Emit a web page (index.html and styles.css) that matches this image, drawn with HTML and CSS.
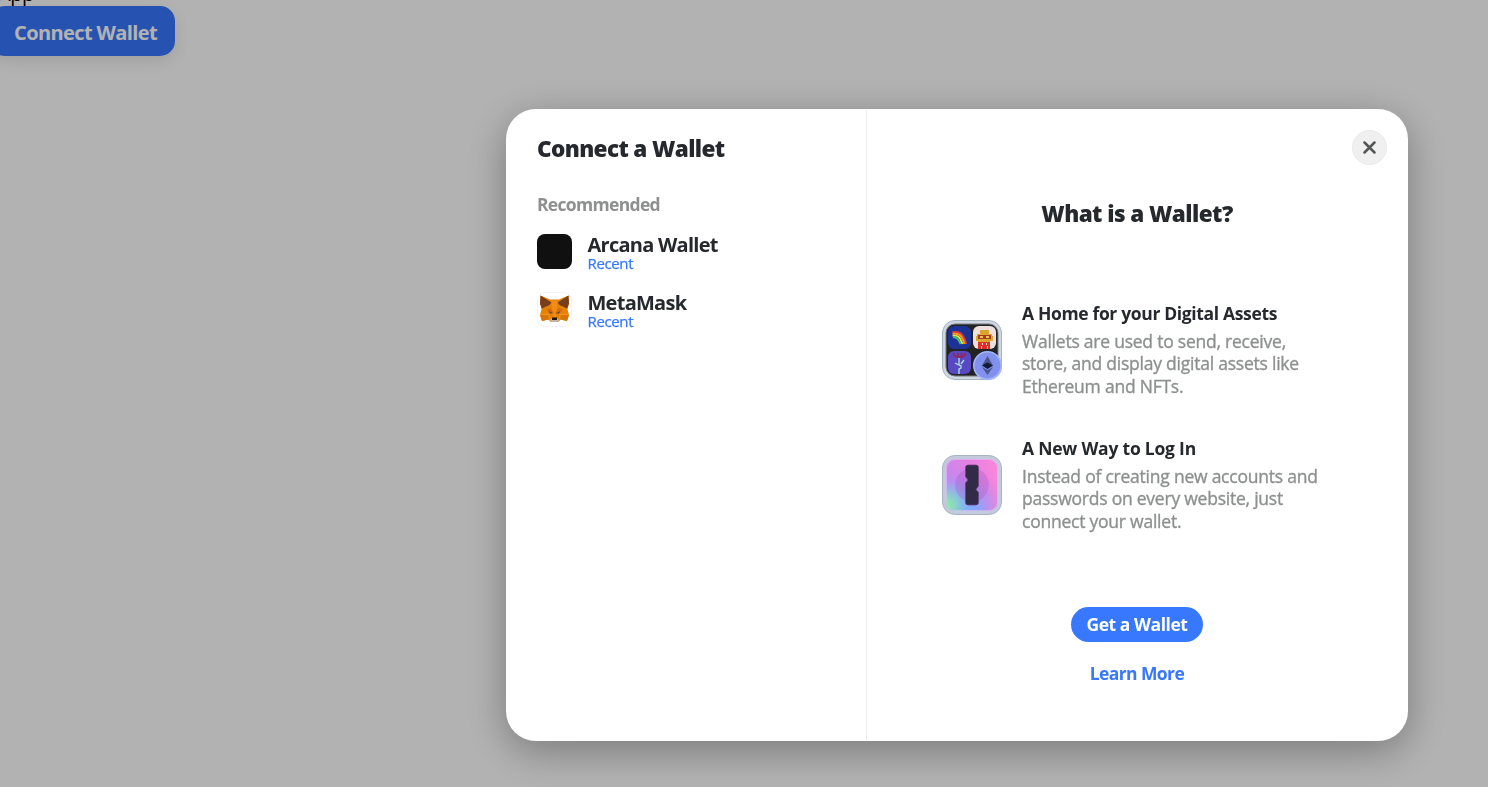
FILE: index.html
```html
<!DOCTYPE html>
<html lang="en">
<head>
<meta charset="utf-8">
<title>Connect a Wallet</title>
<link rel="stylesheet" href="styles.css">
</head>
<body>
<main class="page">
  <div class="app-label">App</div>
  <button class="connect">Connect Wallet</button>
</main>
<div class="overlay">
  <section class="modal">
    <aside class="wallets">
      <h1 class="title">Connect a Wallet</h1>
      <div class="group">Recommended</div>
      <div class="wallet">
        <span class="logo logo-arcana"></span>
        <div class="wallet-text"><div class="name">Arcana Wallet</div><div class="recent">Recent</div></div>
      </div>
      <div class="wallet">
        <span class="logo logo-metamask">
          <svg width="35" height="35" viewBox="0 0 35 35">
            <path fill="#e88205" d="M3.500 3.500 13 7.500h9l9.500-4 .5 8-1.500 6 1.500 5.500-2 6-6-1.500-3 2.500h-7l-3-2.500-6 1.500-2-6 1.500-5.500L3 11.500z"/>
            <path fill="#763e1a" d="M3.500 3.500 14.500 10.500l-2 2.500-7.500 3.500L3 11.500zM31.500 3.500 20.500 10.500l2 2.500 7.500 3.500 2-5z"/>
            <path fill="#f5921b" d="M14.500 9h6l-1.500 16h-3z" opacity=".7"/>
            <path fill="#cd6116" d="m9.500 17.500 4-1.500 3.500 5.500-5-.5zM25.500 17.500l-4-1.500-3.500 5.500 5-.5z" opacity=".7"/>
            <path fill="#d77509" d="M3 23h9l-.5 4.500L5 29zM32 23h-9l.5 4.500 6.500 1.500z"/>
            <path fill="none" stroke="#f6a13e" stroke-width=".6" d="M3.500 22.500h8l1 4M31.500 22.500h-8l-1 4"/>
            <path fill="#51473f" d="m12 19 4 2.200-3 .3zM23 19l-4 2.200 3 .3z"/>
            <path fill="#c8b5a5" d="m12.500 28 2.500-2h5l2.500 2-2.500 2h-5z"/>
            <path fill="#201712" d="M15 25.500h5v2.500h-5z"/>
          </svg>
        </span>
        <div class="wallet-text"><div class="name">MetaMask</div><div class="recent">Recent</div></div>
      </div>
    </aside>
    <div class="intro">
      <button class="close" aria-label="Close"><svg width="13" height="13" viewBox="0 0 13 13"><path d="M1.500 1.500l10 10M11.500 1.500l-10 10" stroke="#535856" stroke-width="2.500" stroke-linecap="round"/></svg></button>
      <h2 class="question">What is a Wallet?</h2>
      <div class="features">
        <div class="feature">
          <svg class="art" width="60" height="60" viewBox="0 0 60 60">
            <rect x=".5" y=".5" width="59" height="59" rx="12.500" fill="#d0d5e2" stroke="#a5b4c5"/>
            <rect x="4" y="4" width="52" height="52" rx="9" fill="#222325" stroke="#73787f"/>
            <rect x="6" y="6" width="23" height="23" rx="6" fill="#1d3297"/>
            <rect x="31" y="6" width="23" height="23" rx="6" fill="#eee0dc"/>
            <rect x="6" y="31" width="23" height="23" rx="6" fill="#5948c3"/>
            <g fill="none" stroke-width="1.900"><path stroke="#e33936" d="M10.500 12h3q5 0 7.500 4t3 8"/><path stroke="#f79a26" d="M10.500 13.800h3q4 0 6 3.200t3 7"/><path stroke="#f4df35" d="M10.500 15.600h2q4 0 5.500 3t2.500 5.400"/><path stroke="#45be70" d="M11 17.300h1q3 0 4.500 2.700t2.200 4"/></g>
            <path fill="#dca52e" d="M38 10h9v4h3v2h1v5h-3v2H36v-2h-2v-5h1v-2h3z"/>
            <path fill="#a93d24" d="M36 15h13v4H36z"/><path fill="#f1c45a" d="M38 16h3v2h-3zM44 16h3v2h-3z"/><path fill="#df2c26" d="M36 22h12v7H36z"/><path fill="#f2e9d8" d="M40 23h1v2h-1zM44 23h1v2h-1zM39 26h1v3h-1zM45 26h1v3h-1z"/>
            <path d="M17 37v8l2 1v2l-2 1v5M13 43l4 2M22 40l-3 4" fill="none" stroke="#ace6db" stroke-width="1.300"/>
            <path d="M12 33v2l3 2h5l3-2v-2M16 33v3M19.500 33v3" fill="none" stroke="#8d2860" stroke-width="1.800"/>
            <circle cx="45.500" cy="45.500" r="13.700" fill="#8391ee" stroke="#a3b5fb" stroke-width="1.600"/>
            <path fill="#4b558e" d="m45.500 36-5.500 9.500 5.500 3 5.500-3zM40 47l5.500 8 5.500-8-5.500 3z"/><path fill="#121b35" d="m45.500 42.500-5.500 3 5.500 3.500 5.500-3.500z"/>
          </svg>
          <div class="copy"><h3 class="heading">A Home for your Digital Assets</h3><p class="text">Wallets are used to send, receive,<br>store, and display digital assets like<br>Ethereum and NFTs.</p></div>
        </div>
        <div class="feature">
          <svg class="art" width="60" height="60" viewBox="0 0 60 60">
            <defs>
              <linearGradient id="pink" x1="0" y1=".5" x2="1" y2=".3"><stop stop-color="#c987ec"/><stop offset=".55" stop-color="#e680e3"/><stop offset="1" stop-color="#fa86d9"/></linearGradient>
              <radialGradient id="blue" cx=".3" cy="1" r=".85"><stop stop-color="#74adff"/><stop offset=".4" stop-color="#85a8fc" stop-opacity=".9"/><stop offset="1" stop-color="#b78af2" stop-opacity="0"/></radialGradient>
              <radialGradient id="green" cx="0" cy=".9" r=".5"><stop stop-color="#83f893"/><stop offset=".35" stop-color="#8ee0b7" stop-opacity=".8"/><stop offset="1" stop-color="#90bef0" stop-opacity="0"/></radialGradient>
            </defs>
            <rect x=".5" y=".5" width="59" height="59" rx="12.500" fill="#c3cadb" stroke="#a9b4c3"/>
            <rect x="4" y="4" width="52" height="52" rx="9" fill="url(#pink)"/>
            <rect x="4" y="4" width="52" height="52" rx="9" fill="url(#blue)"/><rect x="4" y="4" width="52" height="52" rx="9" fill="url(#green)"/>
            <rect x="4.500" y="4.500" width="51" height="51" rx="8.500" fill="none" stroke="#e6c3f5" opacity=".6"/>
            <circle cx="30" cy="30" r="17" fill="#a952bf" opacity=".3"/>
            <path d="M26 10h8q2.500 0 2.500 2.500V31l-2.500 3.500 2.500 3v10q0 2.500-2.500 2.500h-8q-2.500 0-2.500-2.500V28l2.500-3-2.500-3.500v-9Q23.500 10 26 10z" fill="#322b47" stroke="#6d3d80" stroke-width=".7"/>
          </svg>
          <div class="copy"><h3 class="heading heading-login">A New Way to Log In</h3><p class="text">Instead of creating new accounts and<br>passwords on every website, just<br>connect your wallet.</p></div>
        </div>
      </div>
      <button class="get">Get a Wallet</button>
      <a class="learn">Learn More</a>
    </div>
  </section>
</div>
</body>
</html>
```
FILE: styles.css
```css
* { box-sizing: border-box; }
body { margin: 0; height: 787px; overflow: hidden; background: #fff; font-family: "Open Sans", "Noto Sans", sans-serif; color: #25292e; }
button { border: 0; font-family: inherit; padding: 0; }
h1, h2, h3, p { margin: 0; }
.page { display: flex; flex-direction: column; align-items: flex-start; }
.app-label { height: 6px; margin-left: -2px; font-size: 20px; line-height: 25px; letter-spacing: -.4px; color: #000; display: flex; align-items: flex-end; }
.connect { position: relative; width: 185px; height: 50px; margin-left: -10px; padding: 4px 0 0 24px; border-radius: 15px; background: #3778ff; color: #fff; text-align: left; box-shadow: 0 5px 15px rgba(0,0,0,.1); font-size: 20px; font-weight: 700; line-height: 46px; letter-spacing: -.6px; white-space: nowrap; }
.overlay { position: fixed; inset: 0; display: flex; align-items: flex-start; padding: 109px 80px 0 506px; background: rgba(0,0,0,.3); }
.modal { display: flex; width: 902px; height: 632px; padding: 1px 0; background: #fff; border-radius: 30px; box-shadow: 0 10px 40px rgba(0,0,0,.32); overflow: hidden; white-space: nowrap; }
.wallets { width: 361px; padding: 24px 31px; border-right: 1px solid #eeeeef; }
.title { font-size: 22.5px; line-height: 30px; font-weight: 800; letter-spacing: -.62px; }
.group { margin-top: 29px; font-size: 17.5px; line-height: 22px; font-weight: 700; letter-spacing: -.68px; color: #8d908f; }
.wallet { display: flex; gap: 15px; height: 58px; padding-top: 11px; }
.group + .wallet { margin-top: 8px; }
.logo { width: 35px; height: 35px; border-radius: 8px; overflow: hidden; }
.logo-arcana { background: #101010; }
.logo-metamask { border: 1px solid #f2f2f2; }
.logo-metamask svg { display: block; margin: -1px; }
.wallet-text { height: 38px; padding-left: .5px; }
.name { font-size: 20px; line-height: 22px; font-weight: 700; letter-spacing: -.74px; }
.recent { font-size: 15px; line-height: 15px; letter-spacing: -.36px; color: #3778ff; -webkit-text-stroke: .25px #3778ff; }
.intro { flex: 1; display: flex; flex-direction: column; align-items: center; padding: 20px 22px 20px 21px; }
.close { align-self: flex-end; margin-right: -1px; width: 35px; height: 35px; border-radius: 50%; background: #f0f0f0; border: 1px solid #e8e8e8; display: flex; align-items: center; justify-content: center; }
.question { margin-top: 34px; font-size: 22.5px; line-height: 30px; font-weight: 800; letter-spacing: -.56px; }
.features { width: 390px; margin-top: 73px; display: flex; flex-direction: column; gap: 40px; }
.feature { display: flex; align-items: center; gap: 20px; height: 95px; }
.art { flex: none; }
.heading { font-size: 17.5px; line-height: 22.5px; font-weight: 700; letter-spacing: -.35px; }
.heading-login { letter-spacing: -.22px; }
.text { margin-top: 5px; font-size: 17.5px; line-height: 22.5px; letter-spacing: -.23px; color: #8d908f; -webkit-text-stroke: .35px #8d908f; }
.get { margin-top: 75px; width: 132px; height: 35px; border-radius: 18px; background: #3778ff; color: #fff; font-size: 17.5px; line-height: 35px; font-weight: 700; letter-spacing: -.45px; }
.learn { margin-top: 20px; color: #3778ff; font-size: 17.5px; line-height: 22px; font-weight: 700; letter-spacing: -.6px; }
```
